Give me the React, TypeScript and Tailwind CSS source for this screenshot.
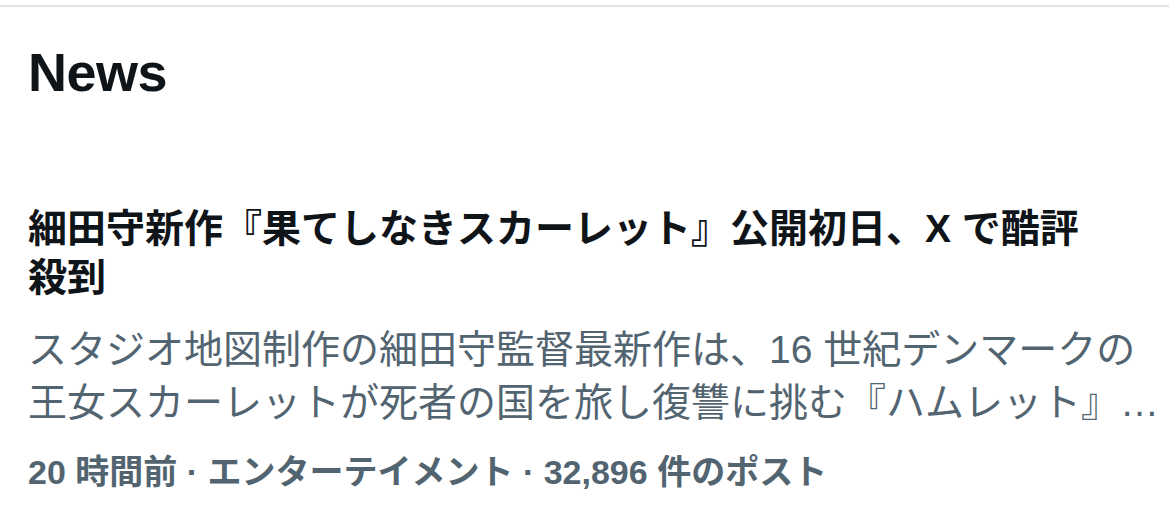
import React from "react";

const font = {
  fontFamily: '"Liberation Sans", "Noto Sans CJK JP", sans-serif',
};

const NewsHeader: React.FC = () => (
  <div className="px-[28px] pt-[32px] pb-[99px]">
    <h2 className="text-[54px] leading-[66px] font-bold text-[#0f1419] tracking-[-0.5px]">
      News
    </h2>
  </div>
);

const NewsItem: React.FC<{
  title: string;
  summary: string;
  meta: string;
}> = ({ title, summary, meta }) => (
  <div className="pl-[28px]">
    <div className="max-w-[1080px] text-[39px] leading-[49px] font-bold text-[#0f1419]">
      {title}
    </div>
    <div className="mt-[21px] text-[39px] leading-[53px] text-[#536471] line-clamp-2">
      {summary}
    </div>
    <div className="mt-[21px] text-[34px] leading-[44px] font-bold text-[#536471]">
      {meta}
    </div>
  </div>
);

export default function App() {
  return (
    <div className="w-[1169px] h-[526px] bg-white overflow-hidden" style={font}>
      <div className="h-[5px]" />
      <div className="border-t-2 border-[#e1e3e5]">
        <NewsHeader />
        <NewsItem
          title="細田守新作『果てしなきスカーレット』公開初日、X で酷評殺到"
          summary="スタジオ地図制作の細田守監督最新作は、16 世紀デンマークの王女スカーレットが死者の国を旅し復讐に挑む『ハムレット』を下敷きにした冒険活劇。公開初日から X では賛否が分かれ、厳しい評価が相次いでいる。"
          meta="20 時間前 · エンターテイメント · 32,896 件のポスト"
        />
      </div>
    </div>
  );
}
